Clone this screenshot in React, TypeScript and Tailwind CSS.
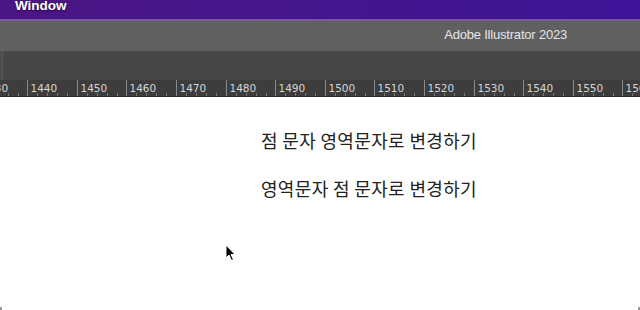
import React from 'react';

const labels = [1430, 1440, 1450, 1460, 1470, 1480, 1490, 1500, 1510, 1520, 1530, 1540, 1550, 1560];

function Ruler() {
  const start = -22.5;
  const step = 49.6;
  return (
    <svg width="640" height="16" className="block">
      <rect width="640" height="16" fill="#3d3d3d" />
      {labels.map((n, i) => {
        const x = Math.round(start + i * step) + 0.5;
        return (
          <g key={n}>
            <line x1={x} y1={0} x2={x} y2={16} stroke="#8a8a8a" strokeWidth={1} />
            {[1, 2, 3, 4].map((k) => (
              <line
                key={k}
                x1={Math.round(x + k * step / 5) + 0.5}
                y1={13}
                x2={Math.round(x + k * step / 5) + 0.5}
                y2={16}
                stroke="#7a7a7a"
                strokeWidth={1}
              />
            ))}
            <text
              x={x + 3}
              y={11.5}
              fill="#d6d6d6"
              fontSize="10.5"
              fontFamily="'DejaVu Sans', sans-serif"
            >
              {n}
            </text>
          </g>
        );
      })}
    </svg>
  );
}

function Cursor() {
  return (
    <svg width="12" height="18" viewBox="0 0 12 18" className="block">
      <path
        d="M1 1 L1 14 L4 11 L6.5 16.5 L8.5 15.5 L6 10.5 L10 10.5 Z"
        fill="#000"
        stroke="#fff"
        strokeWidth="1"
        strokeLinejoin="round"
      />
    </svg>
  );
}

export default function App() {
  return (
    <div className="w-[640px] h-[310px] overflow-hidden bg-white flex flex-col font-['Liberation_Sans',sans-serif]">
      <div className="h-[19px] bg-gradient-to-r from-[#4b1684] to-[#3d1498] flex items-end px-[15px]">
        <span className="text-white text-[13.5px] font-semibold leading-none pb-[7px] [text-shadow:0_1px_2px_rgba(0,0,0,0.6)]">
          Window
        </span>
      </div>
      <div className="h-[2px] bg-[#7c54ad]" />
      <div className="h-[31px] bg-[#606060] flex items-center justify-end pr-[73px] pb-[2px] border-b border-[#4f4f4f]">
        <span className="text-[#e6e6e6] text-[13px] tracking-[-0.2px]">Adobe Illustrator 2023</span>
      </div>
      <div className="h-[28px] bg-[#464646] flex">
        <div className="w-[3px] bg-[#4e4e4e] border-r border-[#5a5a5a]" />
      </div>
      <Ruler />
      <div className="h-px bg-[#2e2e2e]" />
      <div className="relative flex-1 flex flex-col items-center pl-[98px] pt-[33px] gap-[28px] font-['Noto_Sans_CJK_KR',sans-serif] text-[18px] tracking-[0.35px] text-[#222] leading-[20px]">
        <p>점 문자 영역문자로 변경하기</p>
        <p>영역문자 점 문자로 변경하기</p>
        <div className="absolute left-[225px] top-[147px]">
          <Cursor />
        </div>
        <div className="absolute left-0 bottom-0 w-[2px] h-[3px] bg-[#999]" />
        <div className="absolute right-0 bottom-0 w-[2px] h-[3px] bg-[#999]" />
      </div>
    </div>
  );
}
